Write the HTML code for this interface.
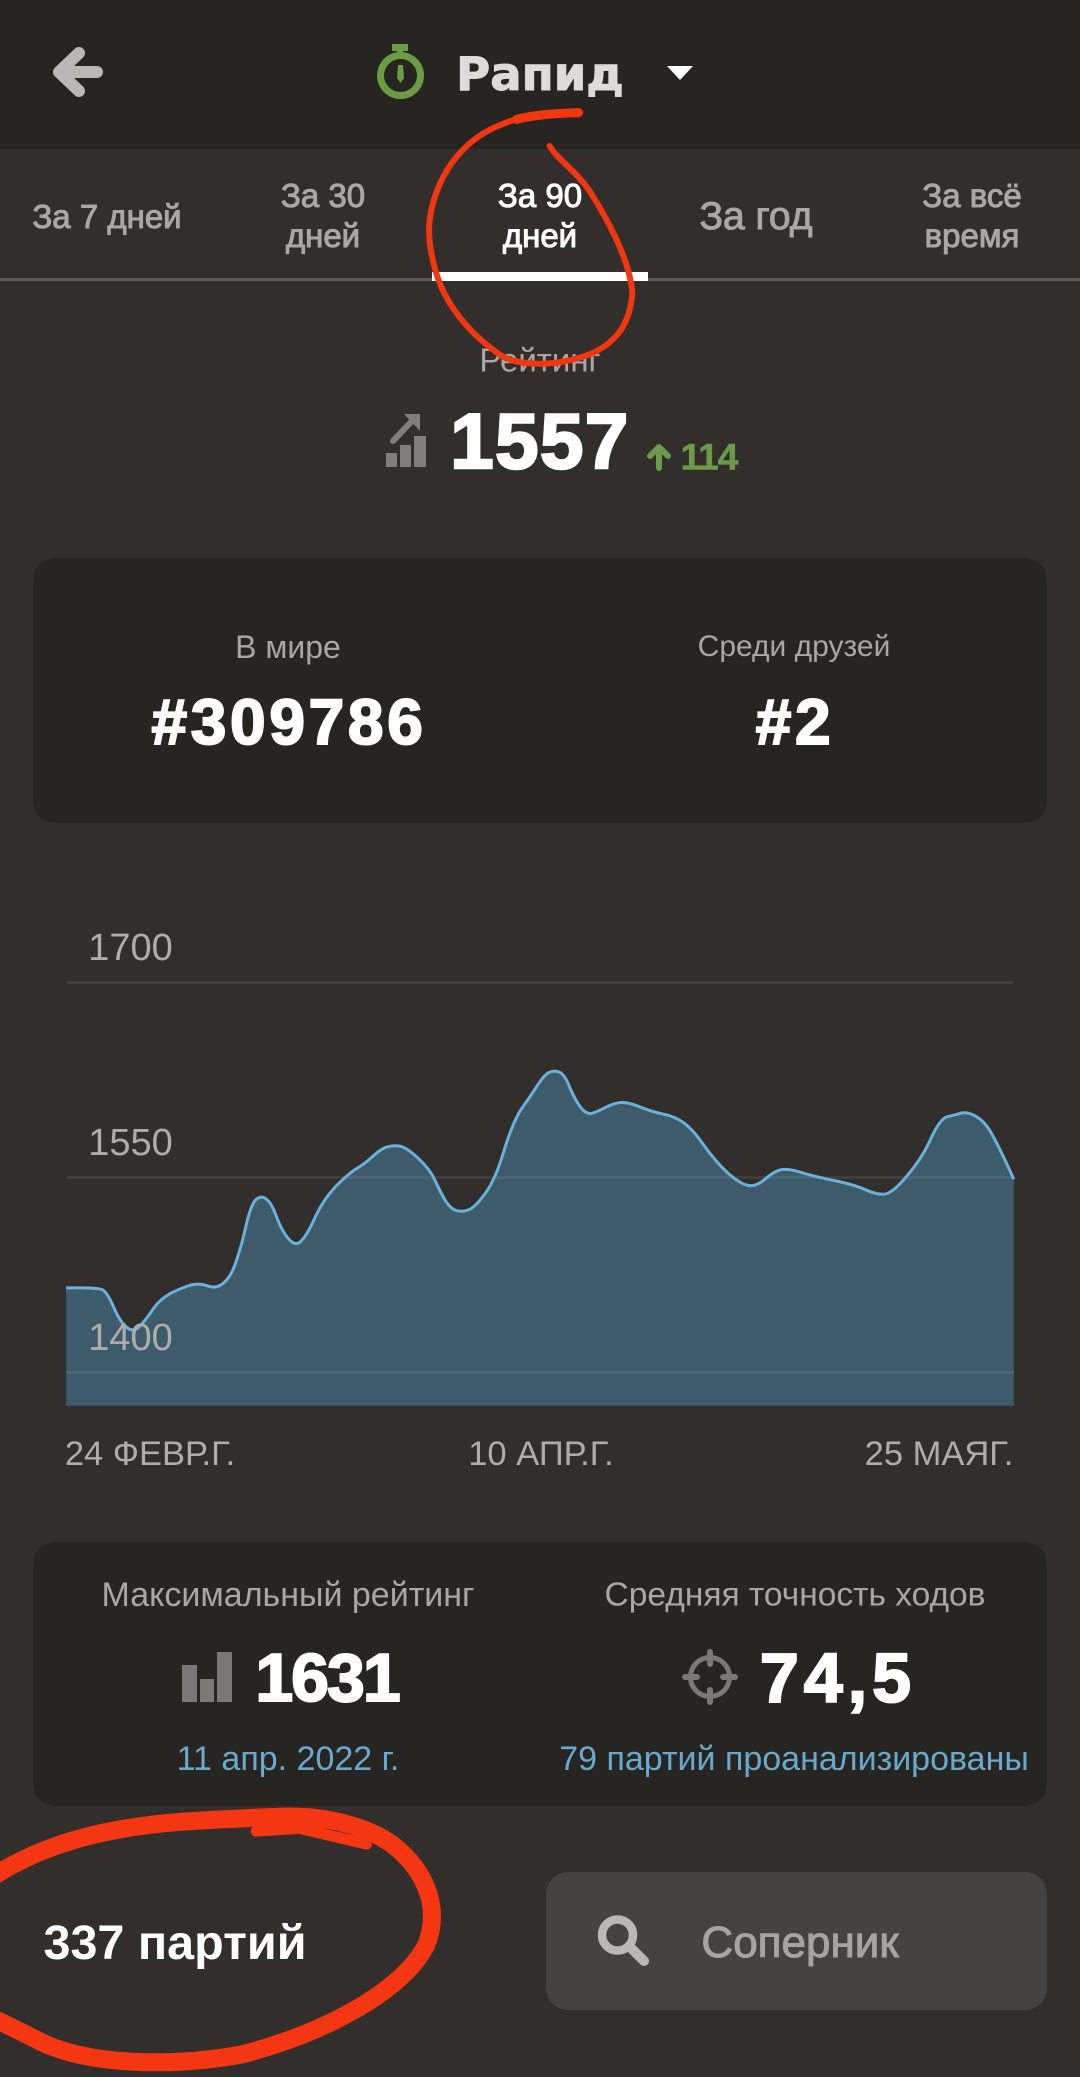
<!DOCTYPE html>
<html lang="ru"><head><meta charset="utf-8"><title>Рапид</title>
<style>
html,body{margin:0;padding:0;background:#312e2b}
#p{position:relative;width:1080px;height:2077px;overflow:hidden;background:#312e2b;font-family:"Liberation Sans","DejaVu Sans",sans-serif;color:#a8a7a5}
.t{position:absolute;white-space:nowrap;transform:translate(-50%,-50%);line-height:1}
.b{font-weight:700}
.w{color:#fff;font-weight:700;-webkit-text-stroke:2px #fff}
.card{position:absolute;left:33px;width:1014px;background:#262522;border-radius:22px}
svg{position:absolute;left:0;top:0}
.tab{font-size:33px;color:#a8a7a5;-webkit-text-stroke:1px #a8a7a5;line-height:40px;text-align:center}
.l{font-size:34px;color:#a8a7a5}
.bl{font-size:34px;color:#69a9cb}
.ax{font-size:38px;color:#aeadab}
.dt{font-size:34.500px;color:#aeadab}
</style></head><body><div id="p">
<div style="position:absolute;left:0;top:0;width:1080px;height:149px;background:#262522"></div>
<div style="position:absolute;left:0;top:278px;width:1080px;height:3px;background:#5c5a58"></div>
<div style="position:absolute;left:432px;top:272px;width:216px;height:9px;background:#fff"></div>

<div class="t" style="left:540px;top:74px;font-family:'DejaVu Sans',sans-serif;font-weight:700;font-size:46.500px;color:#dcdbda;-webkit-text-stroke:1px #dcdbda">Рапид</div>

<div class="t tab" style="left:107px;top:217px">За 7 дней</div>
<div class="t tab" style="left:323px;top:216px">За 30<br>дней</div>
<div class="t tab" style="left:540px;top:216px;color:#fff;-webkit-text-stroke-color:#fff">За 90<br>дней</div>
<div class="t tab" style="left:756px;top:217px;font-size:39px">За год</div>
<div class="t tab" style="left:972px;top:216px">За всё<br>время</div>

<div class="t l" style="left:540px;top:360px;font-size:33px">Рейтинг</div>
<div class="t w" style="left:540px;top:441px;font-size:78px;letter-spacing:1.500px;-webkit-text-stroke:2.500px #fff">1557</div>
<div class="t b" style="left:709px;top:457px;font-size:37px;color:#6c9a4a;letter-spacing:-1px;-webkit-text-stroke:.6px #6c9a4a">114</div>

<div class="card" style="top:558px;height:265px"></div>
<div class="t l" style="left:288px;top:647px;font-size:32px">В мире</div>
<div class="t l" style="left:794px;top:647px;font-size:30px">Среди друзей</div>
<div class="t w" style="left:289px;top:722px;font-size:64px;letter-spacing:3.700px">#309786</div>
<div class="t w" style="left:795px;top:722px;font-size:64px;letter-spacing:3.700px">#2</div>

<div class="t ax" style="left:130.500px;top:948px">1700</div>
<div class="t dt" style="left:150px;top:1454px">24 ФЕВР.Г.</div>
<div class="t dt" style="left:541px;top:1454px">10 АПР.Г.</div>
<div class="t dt" style="left:939px;top:1454px">25 МАЯГ.</div>

<div class="card" style="top:1542px;height:264px"></div>
<div class="t l" style="left:288px;top:1595px">Максимальный рейтинг</div>
<div class="t l" style="left:795px;top:1595px;font-size:33.500px">Средняя точность ходов</div>
<div class="t w" style="left:327px;top:1678px;font-size:68px;letter-spacing:-2px">1631</div>
<div class="t w" style="left:838px;top:1678px;font-size:70px;letter-spacing:5px">74,5</div>
<div class="t bl" style="left:288px;top:1759px">11 апр. 2022 г.</div>
<div class="t bl" style="left:794px;top:1759px">79 партий проанализированы</div>

<div class="t b" style="left:175px;top:1943px;font-size:48.500px;color:#fff">337 партий</div>
<div style="position:absolute;left:546px;top:1872px;width:501px;height:138px;background:#454341;border-radius:22px"></div>
<div class="t" style="left:800px;top:1943px;font-size:44px;color:#a5a4a2;-webkit-text-stroke:1px #a5a4a2">Соперник</div>

<!-- chart -->
<svg width="1080" height="560" viewBox="0 0 1568 1568" preserveAspectRatio="none" style="top:900px">
<path fill="#3d5b6b" d="M96,1086L118,1086Q140,1086 147.5,1090.5Q155,1095 165,1140Q175,1185 185,1198Q195,1212 203,1193Q212,1175 222,1146Q232,1118 248,1101Q265,1085 277,1078Q290,1072 302,1081Q315,1090 326,1070Q337,1050 344,1005Q352,960 358,905Q365,850 372,838Q380,826 387,838Q395,850 402,890Q410,930 420,951Q430,972 438,953Q447,935 458,886Q470,838 487,803Q505,768 517,753Q530,738 541,718Q552,698 561,692Q570,686 580,689Q590,692 607,723Q625,755 632,787Q640,820 647,843Q655,866 663,870Q672,874 681,867Q690,860 705,820Q720,780 732,700Q745,620 757,585Q770,550 780,520Q790,490 797,483Q805,476 812,482Q820,488 827,524Q835,560 843,581Q852,602 860,597Q868,592 881,579Q895,566 905,567Q915,568 930,580Q945,592 962,599Q980,606 992,623Q1005,640 1022,687Q1040,735 1057,765Q1075,795 1086,799Q1097,804 1111,781Q1125,758 1135,755Q1145,752 1162,762Q1180,773 1210,785Q1240,797 1255,810Q1270,824 1282,824Q1295,824 1317,772Q1340,720 1352,666Q1365,612 1375,607Q1385,603 1395,597Q1405,592 1417,606Q1430,620 1440,655Q1450,690 1461,736Q1472,782 1472,782L1472,1416L96,1416Z"/>
<g fill="#fff" fill-opacity=".08"><rect x="96" y="227" width="1376" height="8"/><rect x="96" y="773" width="1376" height="8"/><rect x="96" y="1319" width="1376" height="8"/></g>
<path fill="none" stroke="#6bb2d8" stroke-width="3" vector-effect="non-scaling-stroke" d="M96,1086L118,1086Q140,1086 147.5,1090.5Q155,1095 165,1140Q175,1185 185,1198Q195,1212 203,1193Q212,1175 222,1146Q232,1118 248,1101Q265,1085 277,1078Q290,1072 302,1081Q315,1090 326,1070Q337,1050 344,1005Q352,960 358,905Q365,850 372,838Q380,826 387,838Q395,850 402,890Q410,930 420,951Q430,972 438,953Q447,935 458,886Q470,838 487,803Q505,768 517,753Q530,738 541,718Q552,698 561,692Q570,686 580,689Q590,692 607,723Q625,755 632,787Q640,820 647,843Q655,866 663,870Q672,874 681,867Q690,860 705,820Q720,780 732,700Q745,620 757,585Q770,550 780,520Q790,490 797,483Q805,476 812,482Q820,488 827,524Q835,560 843,581Q852,602 860,597Q868,592 881,579Q895,566 905,567Q915,568 930,580Q945,592 962,599Q980,606 992,623Q1005,640 1022,687Q1040,735 1057,765Q1075,795 1086,799Q1097,804 1111,781Q1125,758 1135,755Q1145,752 1162,762Q1180,773 1210,785Q1240,797 1255,810Q1270,824 1282,824Q1295,824 1317,772Q1340,720 1352,666Q1365,612 1375,607Q1385,603 1395,597Q1405,592 1417,606Q1430,620 1440,655Q1450,690 1461,736Q1472,782 1472,782"/>
</svg>
<div class="t ax" style="left:130.500px;top:1143px">1550</div>
<div class="t ax" style="left:130.500px;top:1338px">1400</div>

<!-- icons in page coords -->
<svg width="1080" height="2077" viewBox="0 0 1080 2077">
<path d="M79,53 L59,72 L79,91" fill="none" stroke="#b9b8b7" stroke-width="12" stroke-linecap="round" stroke-linejoin="round"/>
<path d="M60,72 H97" fill="none" stroke="#b9b8b7" stroke-width="12" stroke-linecap="round"/>
<circle cx="400.500" cy="75.500" r="20" fill="none" stroke="#6c9d45" stroke-width="7"/>
<rect x="392" y="44" width="16" height="7" fill="#6c9d45"/><rect x="397" y="50" width="6" height="6" fill="#6c9d45"/>
<path d="M398,65 H403 L404,78 L400.500,83 L397,78Z" fill="#6c9d45"/>
<path d="M667,66 H693 L680,80Z" fill="#fff"/>
<g fill="#7f7e7c"><rect x="386" y="453" width="11" height="14"/><rect x="400" y="445" width="11" height="22"/><rect x="414" y="436" width="12" height="31"/></g>
<path d="M393,441 L412,421" fill="none" stroke="#7f7e7c" stroke-width="6" stroke-linecap="round"/>
<path d="M404,414 H420 V431Z" fill="#7f7e7c"/>
<path d="M659,468 V448 M650,456 L659,447 L668,456" fill="none" stroke="#6c9a4a" stroke-width="6" stroke-linecap="round" stroke-linejoin="round"/>
<g fill="#7a7977"><rect x="182" y="1665" width="15" height="37"/><rect x="200" y="1679" width="14" height="23"/><rect x="217" y="1652" width="15" height="50"/></g>
<circle cx="710" cy="1677" r="19.500" fill="none" stroke="#7a7977" stroke-width="5"/>
<path d="M710,1652 V1664 M710,1690 V1702 M685,1677 H697 M723,1677 H735" stroke="#7a7977" stroke-width="6" fill="none" stroke-linecap="round"/>
<circle cx="617.500" cy="1935" r="15.500" fill="none" stroke="#b9b8b7" stroke-width="8.500"/>
<path d="M632,1949 L644,1961" stroke="#b9b8b7" stroke-width="10" fill="none" stroke-linecap="round"/>
</svg>

<!-- scribble 1 -->
<svg width="1080" height="520" viewBox="0 0 1568 1560" preserveAspectRatio="none">
<path d="M840,338 C790,342 760,345 730,372 C680,410 650,490 635,570 C620,650 618,720 635,830 C650,920 680,1000 730,1070 C760,1100 810,1100 860,1060 C900,1020 915,960 918,880 C915,780 880,650 855,570 C835,510 810,480 798,438" fill="none" stroke="#f0370f" stroke-width="6" vector-effect="non-scaling-stroke" stroke-linecap="round"/>
<path d="M840,338 C800,341 775,345 750,358" fill="none" stroke="#f0370f" stroke-width="9" vector-effect="non-scaling-stroke" stroke-linecap="round"/>
</svg>
<!-- scribble 2 -->
<svg width="1080" height="557" viewBox="0 0 1568 1568" preserveAspectRatio="none" style="top:1520px">
<path d="M-30,1030 C40,930 130,870 260,850 C320,842 370,838 410,835 C470,832 540,860 580,930 C625,1010 638,1110 618,1200 C585,1320 480,1440 350,1505 C250,1540 130,1535 60,1470 C30,1440 10,1420 -30,1385" fill="none" stroke="#f43712" stroke-width="18" vector-effect="non-scaling-stroke"/>
<path d="M372,876 L435,868 L532,912" fill="none" stroke="#f43712" stroke-width="11" vector-effect="non-scaling-stroke" stroke-linecap="round" stroke-linejoin="round"/>
</svg>
</div></body></html>
